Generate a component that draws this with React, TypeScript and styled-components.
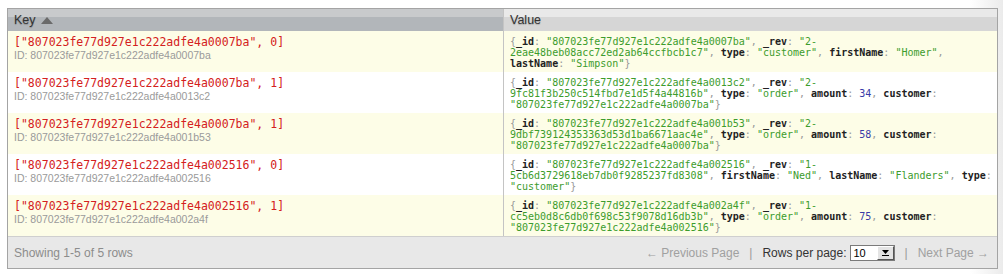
import styled, { createGlobalStyle } from "styled-components";

const GlobalStyle = createGlobalStyle`
  body {
    margin: 0;
    background: linear-gradient(to right, #fff 970px, #ebebeb 1003px);
    font-family: "Liberation Sans", Arial, sans-serif;
  }
`;

const Grid = styled.div`
  box-sizing: border-box;
  width: 991px;
  margin: 8px 0 0 7px;
  border: 1px solid #a4a4a4;
  background: #fff;
`;

const HeaderRow = styled.div`
  display: grid;
  grid-template-columns: 495px 1fr;
  height: 22px;
`;

const HeadCell = styled.div<{ sorted?: boolean }>`
  display: flex;
  align-items: center;
  gap: 5px;
  padding: 0 6px;
  font-size: 12.5px;
  color: #333;
  text-shadow: 0 1px 1px rgba(0, 0, 0, 0.2);
  background: ${(p) =>
    p.sorted
      ? "linear-gradient(#c8cacc 0, #c8cacc 8px, #b2b6ba 8px)"
      : "linear-gradient(#e9e9e9 0, #e9e9e9 8px, #d6d6d6 8px)"};
  border-left: ${(p) => (p.sorted ? "none" : "1px solid #c4c4c4")};
`;

const SortArrow = styled.span`
  width: 0;
  height: 0;
  border-left: 6px solid transparent;
  border-right: 6px solid transparent;
  border-bottom: 7px solid #6a6a6a;
  margin-top: 1px;
`;

const Row = styled.div<{ odd: boolean }>`
  display: grid;
  grid-template-columns: 495px 1fr;
  height: 41px;
  background: ${(p) => (p.odd ? "#fdfde7" : "#fff")};
`;

const KeyCell = styled.div`
  padding: 4px 6px 0;
`;

const KeyText = styled.div`
  font-family: "DejaVu Sans Mono", monospace;
  font-size: 11.5px;
  line-height: 14px;
  color: #d42020;
  white-space: nowrap;
`;

const DocId = styled.div`
  font-size: 10.5px;
  line-height: 12px;
  color: #9a9a9a;
`;

const ValueCell = styled.div`
  border-left: 1px solid #c4c4c4;
  padding: 5px 4px 0 6px;
  font-family: "DejaVu Sans Mono", monospace;
  font-size: 10px;
  line-height: 11px;
  color: #999;
`;

const Field = styled.span`
  font-weight: bold;
  color: #222;
`;

const Str = styled.span`
  color: #3c9c2c;
`;

const Num = styled.span`
  color: #3838a6;
`;

const Footer = styled.div`
  display: flex;
  align-items: center;
  justify-content: space-between;
  height: 31px;
  padding: 0 8px 0 6px;
  border-top: 1px solid #cfcfcf;
  background: #e8e8e8;
  font-size: 12px;
  color: #8c8c8c;
`;

const Pager = styled.div`
  display: flex;
  align-items: center;
`;

const PagerLink = styled.span`
  color: #a0a0a0;
`;

const Sep = styled.span`
  color: #999;
  margin: 0 10px;
`;

const RowsLabel = styled.span`
  color: #333;
  margin-right: 3px;
`;

const SelectBox = styled.div`
  box-sizing: border-box;
  display: flex;
  width: 45px;
  height: 16px;
  border: 1px solid #7a7a7a;
  background: #fff;
`;

const SelectValue = styled.span`
  flex: 1;
  font-size: 11px;
  line-height: 14px;
  padding-left: 3px;
  color: #000;
`;

const SelectButton = styled.span`
  box-sizing: border-box;
  width: 17px;
  height: 14px;
  display: flex;
  align-items: center;
  justify-content: center;
  background: #e4e4e4;
  border: 1px solid;
  border-color: #fff #555 #555 #fff;
`;

type Val = string | number;
interface Doc {
  key: [string, number];
  id: string;
  fields: [string, Val][];
}

const docs: Doc[] = [
  {
    key: ["807023fe77d927e1c222adfe4a0007ba", 0],
    id: "807023fe77d927e1c222adfe4a0007ba",
    fields: [
      ["_id", "807023fe77d927e1c222adfe4a0007ba"],
      ["_rev", "2-2eae48beb08acc72ed2ab64ccfbcb1c7"],
      ["type", "customer"],
      ["firstName", "Homer"],
      ["lastName", "Simpson"],
    ],
  },
  {
    key: ["807023fe77d927e1c222adfe4a0007ba", 1],
    id: "807023fe77d927e1c222adfe4a0013c2",
    fields: [
      ["_id", "807023fe77d927e1c222adfe4a0013c2"],
      ["_rev", "2-9fc81f3b250c514fbd7e1d5f4a44816b"],
      ["type", "order"],
      ["amount", 34],
      ["customer", "807023fe77d927e1c222adfe4a0007ba"],
    ],
  },
  {
    key: ["807023fe77d927e1c222adfe4a0007ba", 1],
    id: "807023fe77d927e1c222adfe4a001b53",
    fields: [
      ["_id", "807023fe77d927e1c222adfe4a001b53"],
      ["_rev", "2-9dbf739124353363d53d1ba6671aac4e"],
      ["type", "order"],
      ["amount", 58],
      ["customer", "807023fe77d927e1c222adfe4a0007ba"],
    ],
  },
  {
    key: ["807023fe77d927e1c222adfe4a002516", 0],
    id: "807023fe77d927e1c222adfe4a002516",
    fields: [
      ["_id", "807023fe77d927e1c222adfe4a002516"],
      ["_rev", "1-5cb6d3729618eb7db0f9285237fd8308"],
      ["firstName", "Ned"],
      ["lastName", "Flanders"],
      ["type", "customer"],
    ],
  },
  {
    key: ["807023fe77d927e1c222adfe4a002516", 1],
    id: "807023fe77d927e1c222adfe4a002a4f",
    fields: [
      ["_id", "807023fe77d927e1c222adfe4a002a4f"],
      ["_rev", "1-cc5eb0d8c6db0f698c53f9078d16db3b"],
      ["type", "order"],
      ["amount", 75],
      ["customer", "807023fe77d927e1c222adfe4a002516"],
    ],
  },
];

function renderValue(v: Val) {
  if (typeof v === "number") return <Num>{v}</Num>;
  // rev strings may wrap after the dash
  const dash = v.indexOf("-");
  if (dash > 0 && dash < 3) {
    return (
      <Str>
        "{v.slice(0, dash + 1)}
        <wbr />
        {v.slice(dash + 1)}"
      </Str>
    );
  }
  return <Str>"{v}"</Str>;
}

function DocValue({ fields }: { fields: [string, Val][] }) {
  return (
    <ValueCell>
      {"{"}
      {fields.map(([k, v], i) => (
        <span key={k}>
          {i > 0 && ", "}
          <Field>{k}</Field>: {renderValue(v)}
        </span>
      ))}
      {"}"}
    </ValueCell>
  );
}

function App() {
  return (
    <>
      <GlobalStyle />
      <Grid>
        <HeaderRow>
          <HeadCell sorted>
            Key <SortArrow />
          </HeadCell>
          <HeadCell>Value</HeadCell>
        </HeaderRow>
        {docs.map((d, i) => (
          <Row key={d.id} odd={i % 2 === 0}>
            <KeyCell>
              <KeyText>[{`"${d.key[0]}", ${d.key[1]}`}]</KeyText>
              <DocId>ID: {d.id}</DocId>
            </KeyCell>
            <DocValue fields={d.fields} />
          </Row>
        ))}
        <Footer>
          <span>Showing 1-5 of 5 rows</span>
          <Pager>
            <PagerLink>← Previous Page</PagerLink>
            <Sep>|</Sep>
            <RowsLabel>Rows per page:</RowsLabel>
            <SelectBox>
              <SelectValue>10</SelectValue>
              <SelectButton>
                <svg width="7" height="6" viewBox="0 0 7 6">
                  <path d="M0 0h7L3.5 4z" fill="#000" />
                  <path d="M0 5.5h7" stroke="#000" strokeWidth="1" />
                </svg>
              </SelectButton>
            </SelectBox>
            <Sep>|</Sep>
            <PagerLink>Next Page →</PagerLink>
          </Pager>
        </Footer>
      </Grid>
    </>
  );
}

export default App;
